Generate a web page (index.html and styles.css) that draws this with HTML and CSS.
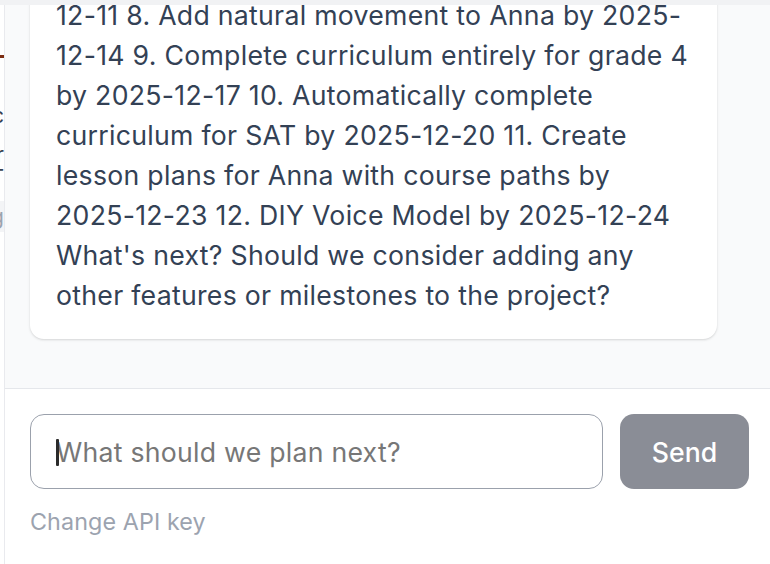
FILE: index.html
```html
<!DOCTYPE html>
<html lang="en">
<head>
<meta charset="utf-8">
<title>Planner chat</title>
<link rel="stylesheet" href="styles.css">
</head>
<body>
<div class="app">
  <div class="topbar"></div>
  <div class="main">
    <aside class="sidebar">
      <div class="sidebar-inner">
        <div class="brand">Project Planner</div>
        <div class="side-line first">Milestone sync</div>
        <div class="side-line second">Anna's tutor</div>
        <div class="side-line">Prep for SAT</div>
        <div class="chip">Settings log</div>
      </div>
    </aside>
    <section class="chat">
      <div class="messages">
        <div class="bubble">
          <p class="msg">Great! Here is the updated list of milestones:
1. Set up the project by 2025-11-20 2. Build
the chat planner by 2025-11-24 3. Add lesson
tracking by 2025-11-28 4. Add grade reports by
2025-12-02 5. Connect the voice engine by
2025-12-05 6. Add parent dashboard by 2025-
12-08 7. Review everything by 2025-
12-11 8. Add natural movement to Anna by 2025-
12-14 9. Complete curriculum entirely for grade 4
by 2025-12-17 10. Automatically complete
curriculum for SAT by 2025-12-20 11. Create
lesson plans for Anna with course paths by
2025-12-23 12. DIY Voice Model by 2025-12-24
What's next? Should we consider adding any
other features or milestones to the project?</p>
        </div>
      </div>
      <div class="composer">
        <form class="composer-row">
          <div class="field">
            <input class="input" type="text" placeholder="What should we plan next?">
          </div>
          <button class="send" type="button">Send</button>
        </form>
        <a class="api-link" href="#">Change API key</a>
      </div>
    </section>
  </div>
</div>
</body>
</html>
```
FILE: styles.css
```css
* { box-sizing: border-box; }
html, body { margin: 0; height: 100%; }
body {
  font-family: Inter, "Noto Sans", "Liberation Sans", sans-serif;
  background: #f3f4f6;
  overflow: hidden;
  color: #374151;
}
.app { display: flex; flex-direction: column; height: 100vh; }
.topbar { height: 5px; flex: none; background: #f1f2f4; }
.main { flex: 1; display: flex; min-height: 0; }

.sidebar {
  width: 5px;
  flex: none;
  background: #fff;
  border-right: 1px solid #e9eaee;
  overflow: hidden;
}
.sidebar-inner { width: 240px; margin-left: -236px; padding-top: 22px; }
.brand {
  font-size: 20px;
  line-height: 28px;
  border-bottom: 3px solid #7c2d12;
  color: #111827;
  white-space: nowrap;
}
.side-line {
  font-size: 21px;
  line-height: 23px;
  text-align: right;
  color: #374151;
  white-space: nowrap;
}
.side-line.first { margin-top: 46px; }
.side-line.second { margin-top: 16px; }
.chip {
  margin-top: 12px;
  height: 31px;
  background: #f3f4f6;
  color: #9ca3af;
  font-size: 21px;
  line-height: 31px;
  text-align: right;
  white-space: nowrap;
}

.chat { flex: 1; min-width: 0; display: flex; flex-direction: column; }
.messages {
  flex: 1;
  min-height: 0;
  overflow: hidden;
  background: #f9fafb;
  display: flex;
  flex-direction: column;
  justify-content: flex-end;
  padding: 0 53px 49px 25px;
}
.bubble {
  background: #fff;
  border-radius: 14px;
  padding: 24px 20px 24px 26px;
  box-shadow: 0 1px 3px rgba(0,0,0,0.10), 0 1px 2px rgba(0,0,0,0.06);
}
.msg {
  margin: 0;
  white-space: pre-line;
  font-size: 26.67px;
  line-height: 40px;
  letter-spacing: 0.28px;
  color: #334155;
}

.composer {
  flex: none;
  height: 176px;
  background: #fff;
  border-top: 1px solid #e5e7eb;
  padding: 25px 21px 0 25px;
}
.composer-row { display: flex; gap: 17px; margin: 0; }
.field { flex: 1; position: relative; }
.field::before {
  content: "";
  position: absolute;
  left: 26px;
  top: 25px;
  width: 3px;
  height: 27px;
  border-radius: 1px;
  background: #2b2b2b;
}
.input {
  width: 100%;
  height: 75px;
  border: 1.5px solid #9ba1ac;
  border-radius: 14px;
  padding: 0 25px;
  font-family: inherit;
  font-size: 26.67px;
  letter-spacing: 0.25px;
  color: #374151;
  background: #fff;
  outline: none;
}
.input::placeholder { color: #777; }
.send {
  width: 129px;
  height: 75px;
  border: none;
  border-radius: 14px;
  background: #8a8d96;
  color: #fff;
  font-family: inherit;
  font-size: 26.67px;
  font-weight: 500;
}
.api-link {
  display: block;
  margin-top: 16px;
  font-size: 23.3px;
  line-height: 33px;
  letter-spacing: 0.1px;
  color: #9ca3af;
  text-decoration: none;
}
```
